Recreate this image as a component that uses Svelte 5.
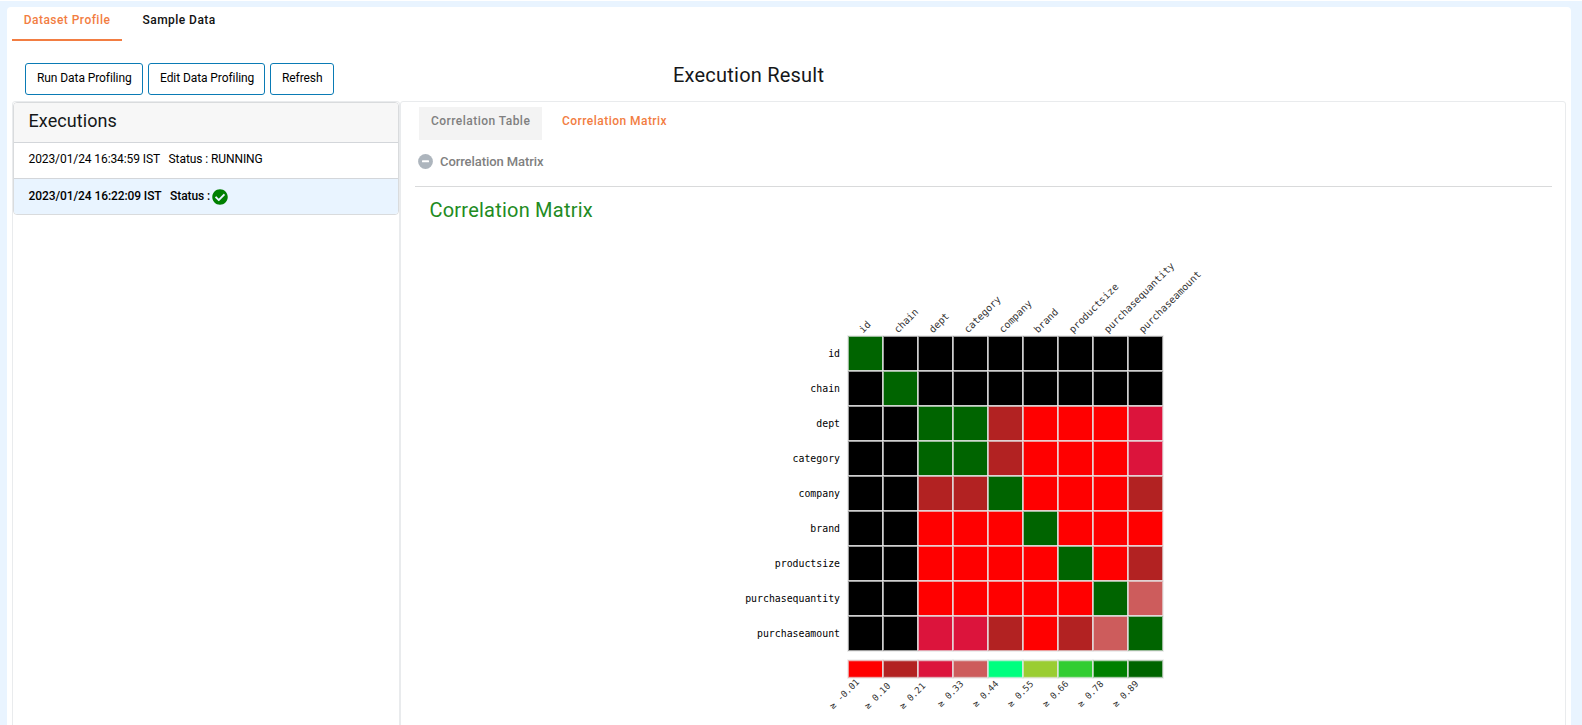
<script>
  const fields = ['id', 'chain', 'dept', 'category', 'company', 'brand', 'productsize', 'purchasequantity', 'purchaseamount'];
  const colors = {
    k: '#000000', r: '#ff0000', f: '#b22222', c: '#dc143c', i: '#cd5c5c',
    s: '#00ff7f', y: '#9acd32', l: '#32cd32', g: '#008000', d: '#006400'
  };
  const rows = ['dkkkkkkkk', 'kdkkkkkkk', 'kkddfrrrc', 'kkddfrrrc', 'kkffdrrrf', 'kkrrrdrrr', 'kkrrrrdrf', 'kkrrrrrdi', 'kkccfrfid'];
  const legend = [
    ['r', '-0.01'], ['f', '0.10'], ['c', '0.21'], ['i', '0.33'], ['s', '0.44'],
    ['y', '0.55'], ['l', '0.66'], ['g', '0.78'], ['d', '0.89']
  ];
  const size = 35;
  const left = 848;
  const top = 96;
</script>

<div class="page">
  <main class="shell">
    <nav class="tabs">
      <button class="tab active">Dataset Profile</button>
      <button class="tab">Sample Data</button>
    </nav>

    <div class="toolbar">
      <div class="actions">
        <button>Run Data Profiling</button>
        <button>Edit Data Profiling</button>
        <button>Refresh</button>
      </div>
      <h2>Execution Result</h2>
    </div>

    <div class="columns">
      <aside class="side">
        <section class="card">
          <h3>Executions</h3>
          <div class="run">
            <span>2023/01/24 16:34:59 IST</span><span>Status : RUNNING</span>
          </div>
          <div class="run selected">
            <span>2023/01/24 16:22:09 IST</span><span>Status :</span>
            <svg class="check" width="16" height="16" viewBox="0 0 512 512" aria-hidden="true">
              <path fill="#008000" d="M504 256c0 136.967-111.033 248-248 248S8 392.967 8 256 119.033 8 256 8s248 111.033 248 248zM227.314 387.314l184-184c6.248-6.248 6.248-16.379 0-22.627l-22.627-22.627c-6.248-6.249-16.379-6.249-22.628 0L216 308.118l-70.059-70.059c-6.248-6.248-16.379-6.248-22.628 0l-22.627 22.627c-6.248 6.248-6.248 16.379 0 22.627l104 104c6.249 6.249 16.379 6.249 22.628.001z" />
            </svg>
          </div>
        </section>
      </aside>

      <section class="result">
        <div class="subtabs">
          <button class="subtab muted">Correlation Table</button>
          <button class="subtab current">Correlation Matrix</button>
        </div>
        <div class="fold">
          <svg width="15" height="15" viewBox="0 0 15 15" aria-hidden="true">
            <circle cx="7.5" cy="7.5" r="7.4" fill="#adb5bd" />
            <rect x="4" y="6.3" width="7" height="2" rx="0.4" fill="#fff" />
          </svg>
          <span>Correlation Matrix</span>
        </div>
        <h3 class="title">Correlation Matrix</h3>
        <svg class="chart" width="1137" height="485" viewBox="415 240 1137 485">
          <g transform="translate(0 240)">
            {#each fields as name, i}
              <text class="mono" text-anchor="end" x="840" y={top + size * i + 20.5}>{name}</text>
              <text class="mono slanted" transform="translate({left + size * i + 15} {top - 2.5}) rotate(-45)">{name}</text>
            {/each}
            {#each rows as row, r}
              {#each row.split('') as key, c}
                <rect class="cell" x={left + size * c} y={top + size * r} width={size} height={size} fill={colors[key]} />
              {/each}
            {/each}
            {#each legend as [key, label], i}
              <rect class="cell" x={left + size * i} y={420.3} width={size} height={size / 2} fill={colors[key]} />
              <text class="mono slanted scale" transform="translate({833 + size * i + (i > 2 ? 3 : 0)} {i > 2 ? 467.5 : 469.5}) rotate(-45)">≥ {label}</text>
            {/each}
          </g>
        </svg>
      </section>
    </div>
  </main>
</div>

<style>
  :global(body) {
    margin: 0;
    overflow: hidden;
  }
  .page {
    box-sizing: border-box;
    height: 725px;
    overflow: hidden;
    padding: 6px 11px 0 7px;
    border-top: 1px solid #fff;
    background: #e9f4ff;
    font-family: Roboto, sans-serif;
    color: #212529;
  }
  button {
    font-family: inherit;
    margin: 0;
    background: none;
    border: 0;
  }
  h2,
  h3 {
    margin: 0;
    font-weight: 400;
    font-size: 20px;
    letter-spacing: 0.22px;
    color: #151719;
  }
  .shell {
    box-sizing: border-box;
    height: 740px;
    padding: 0 5px;
    border-radius: 4px;
    background: #fff;
  }
  .tabs {
    display: flex;
    height: 34px;
  }
  .tab {
    box-sizing: border-box;
    height: 34px;
    padding: 0 11px 6px;
    font-size: 12px;
    line-height: 26px;
    font-weight: 500;
    letter-spacing: 0.46px;
    white-space: nowrap;
    color: #111;
    border-bottom: 2px solid transparent;
  }
  .tab.active {
    width: 110px;
    color: #f27d42;
    border-bottom-color: #f27d42;
  }
  .tab + .tab {
    margin-left: 9.5px;
  }
  .toolbar {
    display: flex;
    height: 60px;
  }
  .actions {
    display: flex;
    gap: 5px;
    width: 648px;
    padding: 22px 0 0 13px;
  }
  .actions button {
    box-sizing: border-box;
    height: 32px;
    padding: 0 11px 3px;
    border: 1px solid #0a7bb5;
    border-radius: 3px;
    font-size: 12px;
    letter-spacing: -0.08px;
    color: #000;
    white-space: nowrap;
  }
  .actions button:nth-child(1) { width: 118px; }
  .actions button:nth-child(2) { width: 117px; }
  .actions button:nth-child(3) { width: 64px; }
  .toolbar h2 {
    line-height: 68px;
  }
  .columns {
    display: flex;
    height: 640px;
  }
  .side,
  .result {
    box-sizing: border-box;
    border: 1px solid #e9ebed;
    border-radius: 3px;
  }
  .side {
    width: 388px;
  }
  .card {
    border: 1px solid #d9dbdd;
    border-radius: 4px;
    overflow: hidden;
  }
  .card h3 {
    height: 39px;
    padding-left: 14.5px;
    font-size: 18px;
    letter-spacing: 0.08px;
    line-height: 36px;
    background: #f7f7f7;
  }
  .run {
    display: flex;
    height: 35px;
    padding-left: 14.5px;
    gap: 8.5px;
    border-top: 1px solid #d3d6da;
    font-size: 12px;
    letter-spacing: -0.09px;
    line-height: 32px;
    color: #000;
  }
  .run.selected {
    background: #e9f4ff;
    font-weight: 500;
    line-height: 34px;
  }
  .check {
    margin: 10px 0 0 -6.5px;
  }
  .result {
    width: 1166px;
    padding: 5px 13px 0 14px;
  }
  .subtabs {
    display: flex;
    gap: 8px;
    padding-left: 4px;
  }
  .subtab {
    height: 33px;
    padding: 0 12px 6px;
    font-size: 12px;
    font-weight: 500;
    letter-spacing: 0.46px;
    white-space: nowrap;
  }
  .muted {
    width: 123px;
    background: #f3f3f3;
    color: #808080;
  }
  .current {
    color: #f27d42;
  }
  .fold {
    display: flex;
    align-items: center;
    gap: 7px;
    box-sizing: border-box;
    height: 47px;
    padding: 0 0 4px 3px;
    border-bottom: 1px solid #d9dadb;
    font-size: 13px;
    letter-spacing: -0.08px;
    font-weight: 500;
    color: #808080;
  }
  .title {
    height: 53px;
    padding-left: 14.5px;
    line-height: 47px;
    color: #228b22;
  }
  .chart {
    display: block;
  }
  .cell {
    stroke: #e6e6e6;
    stroke-width: 2px;
    stroke-opacity: 0.68;
  }
  .mono {
    font-family: "DejaVu Sans Mono", monospace;
    font-size: 9.85px;
    fill: #000;
  }
  .slanted {
    fill: #333;
  }
  .scale {
    font-size: 9px;
  }
</style>
